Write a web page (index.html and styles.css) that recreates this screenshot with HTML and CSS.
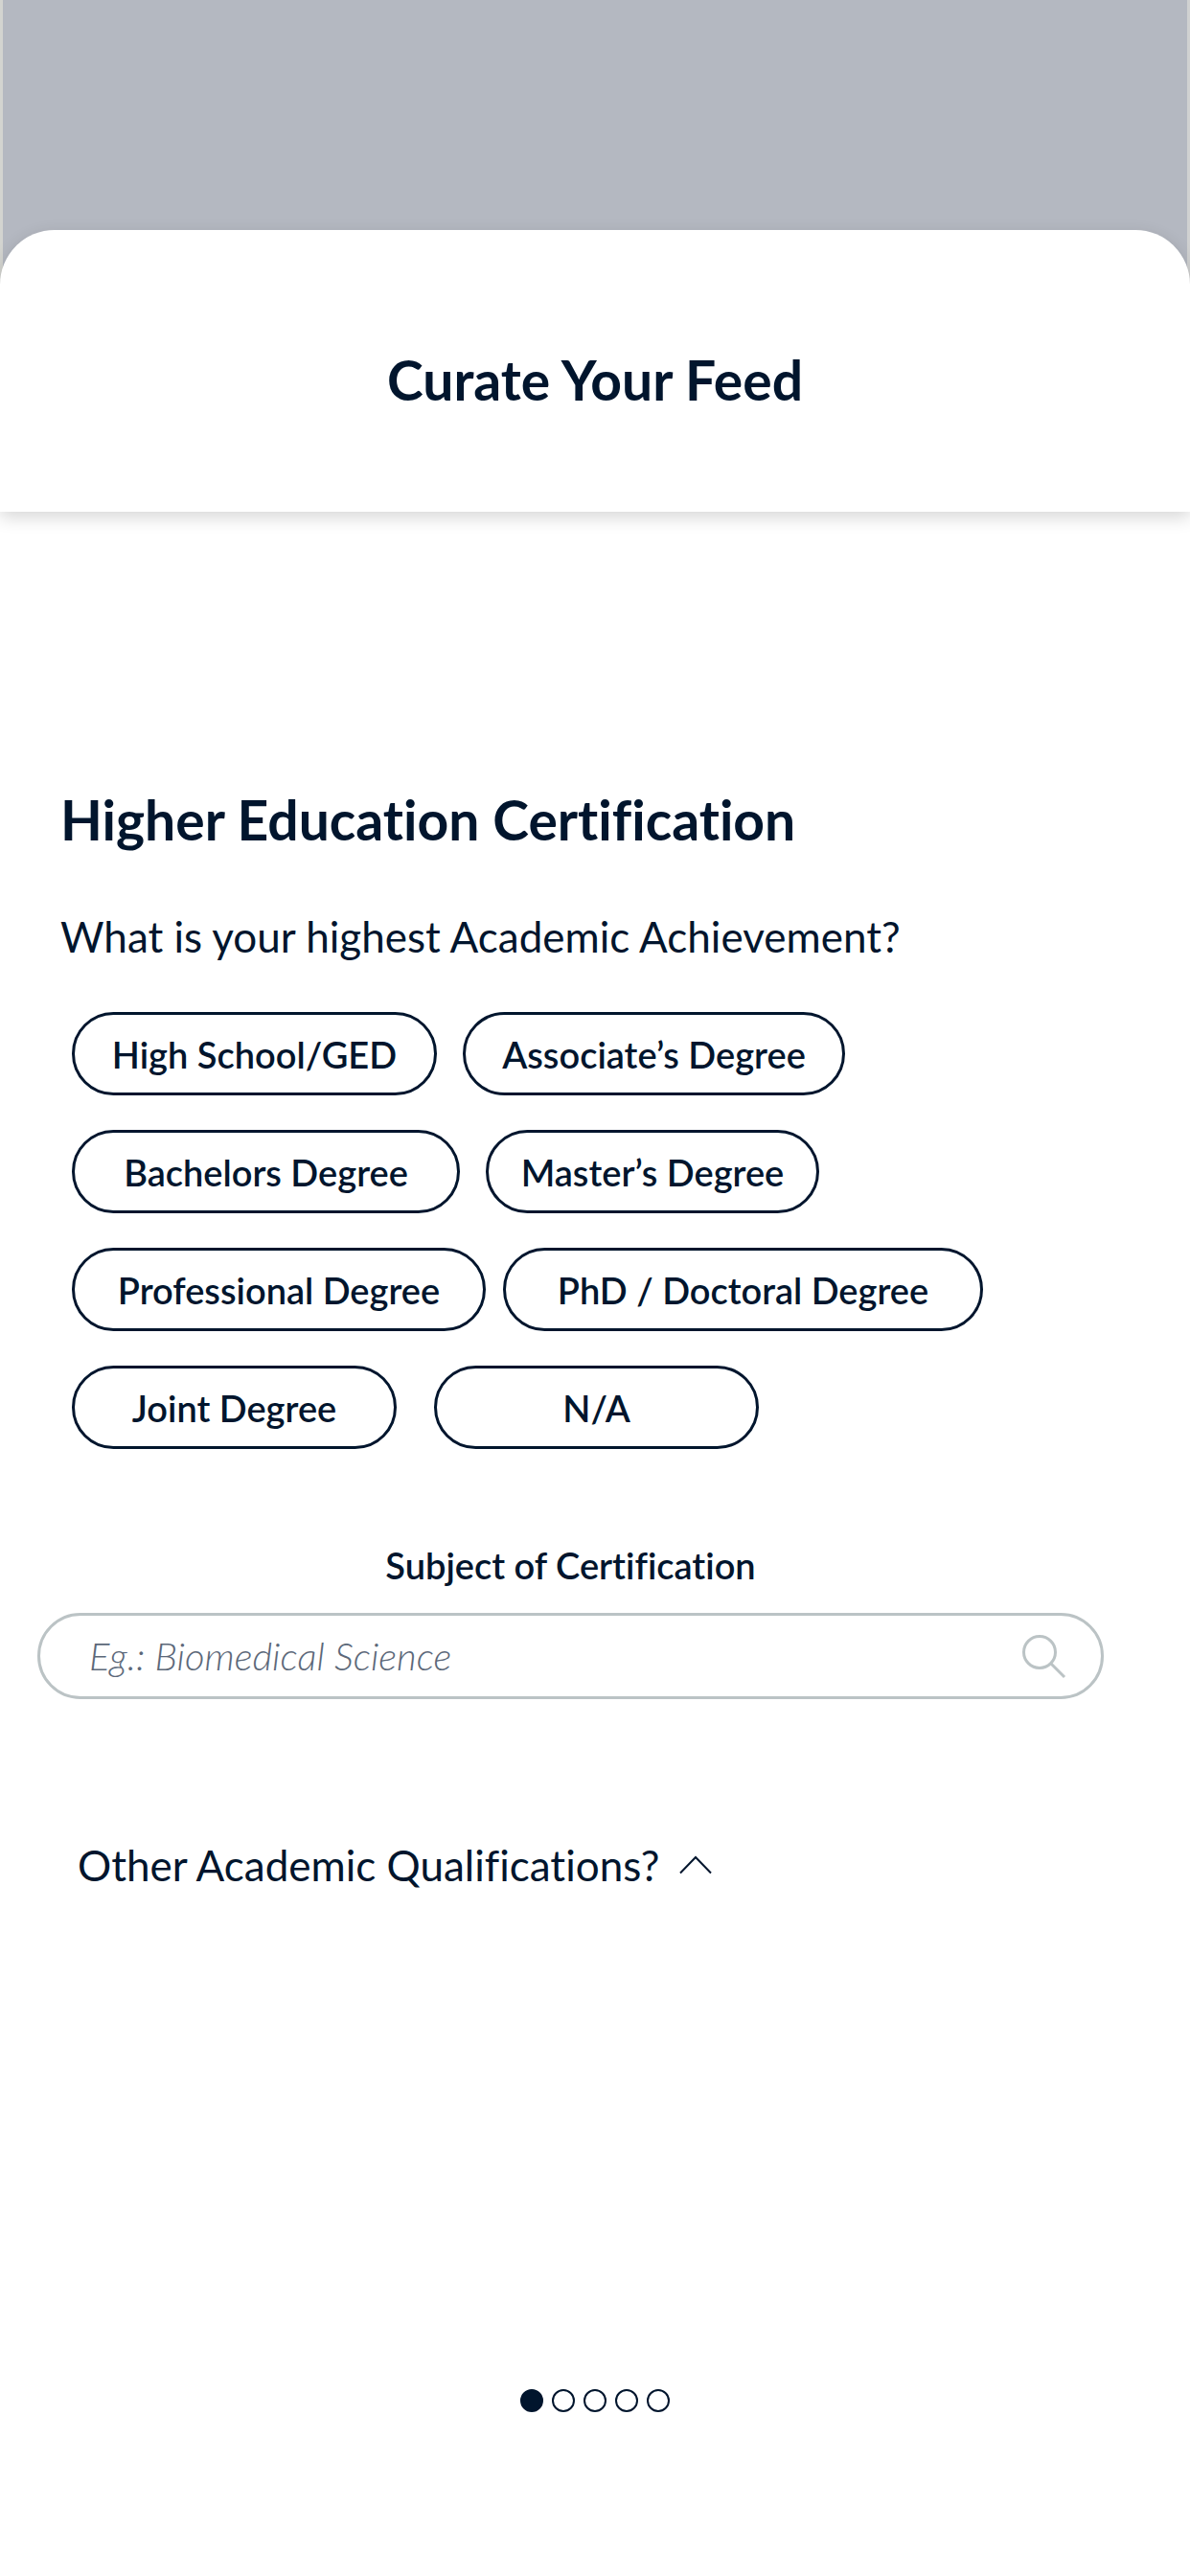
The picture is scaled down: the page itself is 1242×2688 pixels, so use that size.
FILE: index.html
```html
<!DOCTYPE html>
<html lang="en">
<head>
    <meta charset="UTF-8">
    <meta name="viewport" content="width=device-width, initial-scale=1.0" />
    <title>Curate Your Feed</title>
    <link rel="stylesheet" href="styles.css">
</head>
<body>
    <div class="backdrop"></div>
    <div class="sheet">
        <header class="sheet-header">
            <h1>Curate Your Feed</h1>
        </header>
        <main class="content">
            <h2>Higher Education Certification</h2>
            <p class="question" id="question">What is your highest Academic Achievement?</p>
            <div class="options" role="group" aria-labelledby="question">
                <div class="option-row">
                    <button type="button" class="option high-school">High School/GED</button>
                    <button type="button" class="option associate">Associate’s Degree</button>
                </div>
                <div class="option-row">
                    <button type="button" class="option bachelors">Bachelors Degree</button>
                    <button type="button" class="option masters">Master’s Degree</button>
                </div>
                <div class="option-row tight">
                    <button type="button" class="option professional">Professional Degree</button>
                    <button type="button" class="option doctoral">PhD / Doctoral Degree</button>
                </div>
                <div class="option-row wide">
                    <button type="button" class="option short">Joint Degree</button>
                    <button type="button" class="option short">N/A</button>
                </div>
            </div>
            <form class="subject">
                <label for="subject-input">Subject of Certification</label>
                <div class="search-box">
                    <input type="text" id="subject-input" placeholder="Eg.: Biomedical Science">
                    <button type="submit" class="search-btn" aria-label="Search">
                        <svg width="48" height="48" viewBox="0 0 48 48" fill="none" stroke="currentColor" stroke-width="3">
                            <circle cx="20" cy="20" r="16.5" />
                            <path d="M32 32 L46 46" />
                        </svg>
                    </button>
                </div>
            </form>
            <button type="button" class="more-btn">
                Other Academic Qualifications?
                <svg width="34" height="20" viewBox="0 0 34 20" fill="none" stroke="currentColor" stroke-width="2">
                    <path d="M1 18.5 L17 2 L33 18.5" />
                </svg>
            </button>
        </main>
        <nav class="steps" aria-label="Steps">
            <button type="button" class="step active" aria-label="Step 1"></button>
            <button type="button" class="step" aria-label="Step 2"></button>
            <button type="button" class="step" aria-label="Step 3"></button>
            <button type="button" class="step" aria-label="Step 4"></button>
            <button type="button" class="step" aria-label="Step 5"></button>
        </nav>
    </div>
</body>
</html>
```

FILE: styles.css
```css
* {
    padding: 0;
    margin: 0;
    box-sizing: border-box;
    font-family: "Lato", sans-serif;
}
body {
    background-color: #ffffff;
    color: #01152d;
    display: flex;
    flex-direction: column;
    min-height: 100vh;
    font-variant-ligatures: none;
}
button {
    background: none;
    border: none;
    color: inherit;
    cursor: pointer;
    font-variant-ligatures: none;
}
.backdrop {
    height: 300px;
    background-color: #b4b8c1;
    border-left: 3px solid #d3d4d0;
    border-right: 3px solid #d0d1d1;
}
/* Sheet slides up over the backdrop */
.sheet {
    flex: 1;
    display: flex;
    flex-direction: column;
    margin-top: -60px;
    border-radius: 57px 57px 0 0;
}
.sheet-header {
    background-color: #ffffff;
    border-radius: 57px 57px 0 0;
    box-shadow: 0 6px 18px rgba(0, 0, 0, 0.16);
    padding: 126px 24px 108px;
    text-align: center;
}
h1, h2 {
    font-size: 57px;
    font-weight: 700;
    line-height: 60px;
}
.content {
    padding: 291px 90px 60px 39px;
}
h2, .question {
    margin-left: 24px;
}
.question {
    font-size: 44px;
    line-height: 48px;
    margin-top: 68px;
}
.options {
    display: flex;
    flex-direction: column;
    gap: 36px;
    margin: 55px 0 100px 36px;
}
.option-row {
    display: flex;
    gap: 27px;
}
.option-row.tight {
    gap: 18px;
}
.option-row.wide {
    gap: 39px;
}
.option {
    height: 87px;
    border: 3px solid #01152d;
    border-radius: 44px;
    font-size: 38px;
    font-weight: 600;
}
.high-school {
    width: 381px;
}
.associate {
    width: 399px;
}
.bachelors {
    width: 405px;
}
.masters {
    width: 348px;
}
.professional {
    width: 432px;
}
.doctoral {
    width: 501px;
}
.short {
    width: 339px;
}
.subject label {
    display: block;
    font-size: 38px;
    font-weight: 600;
    line-height: 42px;
    text-align: center;
}
.search-box {
    display: flex;
    align-items: center;
    height: 90px;
    margin-top: 29px;
    padding: 0 36px 0 51px;
    border: 3px solid #bbc3c5;
    border-radius: 45px;
}
.search-box input {
    flex: 1;
    min-width: 0;
    border: none;
    outline: none;
    background: none;
    color: #01152d;
    font-size: 40px;
}
.search-box input::placeholder {
    color: #5c6879;
    font-style: italic;
    font-weight: 300;
}
.search-btn {
    display: flex;
    color: #bbc3c5;
}
.more-btn {
    display: flex;
    align-items: center;
    gap: 21px;
    margin: 149px 0 0 42px;
    font-size: 44px;
    line-height: 48px;
}
.steps {
    display: flex;
    justify-content: center;
    gap: 9px;
    margin-top: auto;
    padding-bottom: 171px;
}
.step {
    width: 24px;
    height: 24px;
    border: 2px solid #01152d;
    border-radius: 50%;
}
.step.active {
    background-color: #01152d;
}
```
